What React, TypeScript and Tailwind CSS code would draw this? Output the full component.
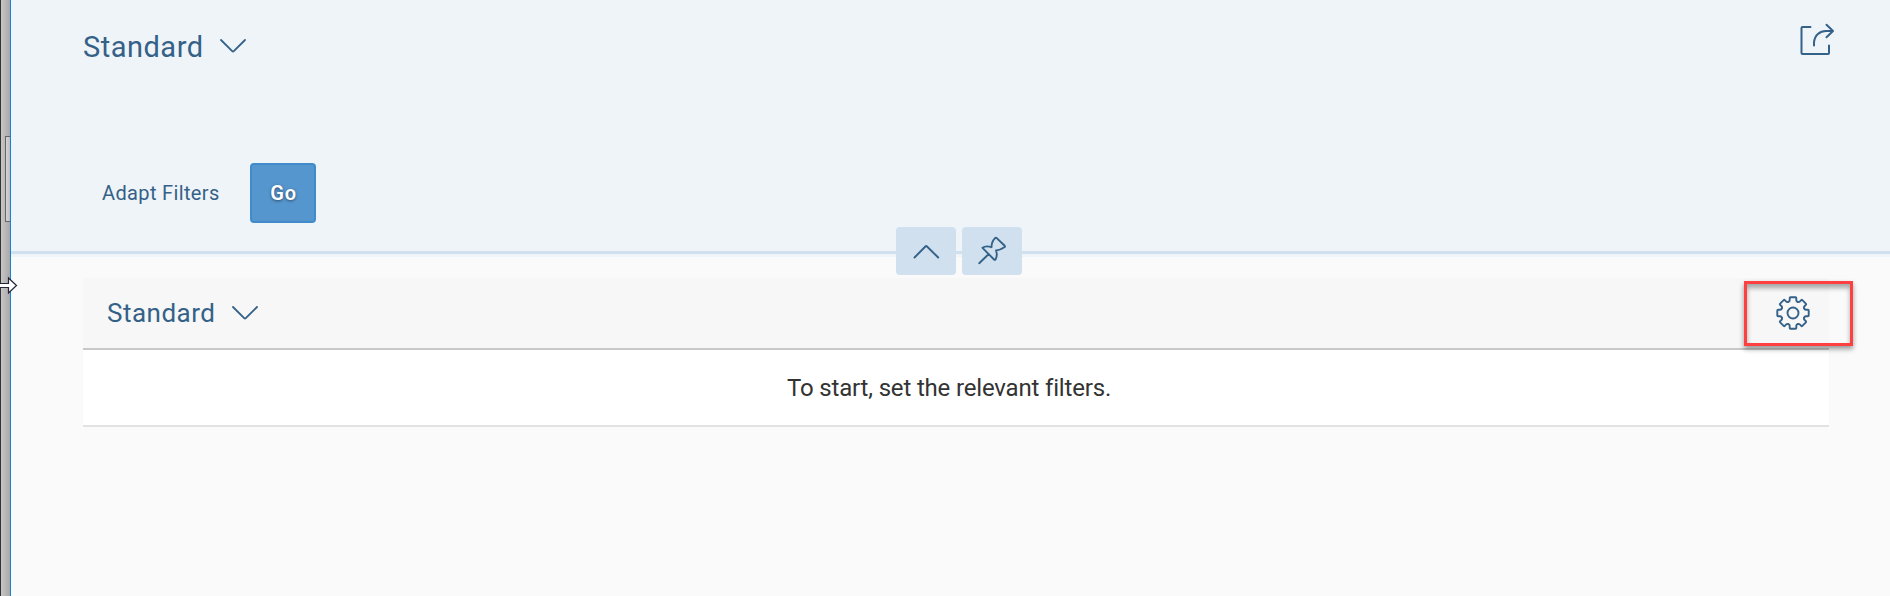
import React from "react";

const ChevronDown = () => (
  <svg width="28" height="16" viewBox="0 0 28 16" fill="none" stroke="#346187" strokeWidth="1.8" strokeLinecap="round" strokeLinejoin="round" className="shrink-0">
    <path d="M2 2L13.2 13.2Q14 14 14.8 13.2L26 2" />
  </svg>
);

const ShareIcon = () => (
  <svg width="40" height="36" viewBox="0 0 40 36" fill="none" stroke="#346187" strokeWidth="2" strokeLinecap="round" strokeLinejoin="round">
    <path d="M13.5 7H5.5Q4.5 7 4.5 8V33Q4.5 34 5.5 34H31Q32 34 32 33V25.5" />
    <path d="M17 25.5V22.5C17.500 15 23 11 29 11H35.500M29.500 4.800L36 11L29.500 17.200" />
  </svg>
);

const PinIcon = () => (
  <svg width="60" height="48" viewBox="0 0 60 48" fill="none" stroke="#346187" strokeWidth="1.9" strokeLinecap="round" strokeLinejoin="round">
    <path d="M17.200 36.200L26.700 27M20.500 20.800Q24 18.200 29.500 20.200Q29.500 15 33 11.200Q34 10.300 35 11.300L42.700 18.800Q43.400 19.600 42.400 20.300Q38.500 23 34 23.500Q35.800 28 33.500 32.500Q32.800 33.300 32 32.500Z" />
  </svg>
);

const GearIcon = () => (
  <svg width="36" height="36" viewBox="-18 -18 36 36" fill="none" stroke="#346187" strokeWidth="1.9" strokeLinecap="round" strokeLinejoin="round">
    <circle r="5.500" />
    {[0, 45, 90, 135, 180, 225, 270, 315].map((angle) => (
      <path key={angle} transform={`rotate(${angle})`} d="M-4.600 -11.200Q-3.300 -11.600 -3.300 -12.800V-14.900Q-3.300 -15.700 -2.500 -15.700H2.500Q3.300 -15.700 3.300 -14.900V-12.800Q3.300 -11.600 4.600 -11.200" />
    ))}
  </svg>
);

export default function App() {
  return (
    <div className="relative flex h-[596px] w-full overflow-hidden bg-[#fafafa] font-['Roboto','Liberation_Sans',sans-serif] text-[#346187]">
      <aside className="w-[11px] shrink-0 border-l border-r border-l-[#333] border-r-[#0f84d8] bg-linear-to-r from-[#c8c5c6] to-[#aaa8a9] pt-[136px]">
        <div className="ml-1 h-[86px] border border-r-0 border-[#65656a] bg-linear-to-r from-[#d8d3d5] to-[#bfbcbe]" />
      </aside>
      <main className="flex min-w-0 flex-1 flex-col">
        <header className="h-[254px] shrink-0 border-b-[3px] border-[#d1e0ee] bg-[#eff4f9]">
          <div className="flex h-[92px] items-center justify-between pl-[72px] pr-[53px]">
            <button className="flex items-center gap-[18px]">
              <span className="w-[118px] whitespace-nowrap pt-px text-[29px] leading-[34px] tracking-[0.5px]">Standard</span>
              <ChevronDown />
            </button>
            <button className="mb-[16px]"><ShareIcon /></button>
          </div>
          <div className="flex items-center pl-[91px] pt-[71px]">
            <button className="w-[148px] whitespace-nowrap text-left text-[20px] leading-6 tracking-[0.36px]">Adapt Filters</button>
            <button className="h-[60px] w-[66px] rounded-[4px] border-2 border-[#428bca] bg-[#5696ce] pl-px text-[20px] font-semibold tracking-[0.7px] text-white [text-shadow:0_1px_3px_#0008]">Go</button>
          </div>
        </header>
        <div className="h-[3px] shrink-0 bg-[#eff4f9]" />
        <section className="ml-[72px] mt-[21px] w-[1746px]">
          <div className="flex h-[72px] items-center justify-between border-b-2 border-[#c8c8c8] bg-[#f7f7f7] pl-6 pr-[18px]">
            <button className="flex items-center gap-[18px]">
              <span className="w-[106px] whitespace-nowrap text-[26px] leading-8 tracking-[0.5px]">Standard</span>
              <ChevronDown />
            </button>
            <button><GearIcon /></button>
          </div>
          <div className="flex h-[77px] items-center border-b-2 border-[#e2e2e2] bg-white pl-[704px] text-[24px] tracking-[-0.17px] text-[#333]">
            <span className="whitespace-nowrap">To start, set the relevant filters.</span>
          </div>
        </section>
      </main>
      <div className="absolute left-[896px] top-[227px] flex gap-[6px]">
        <button className="h-12 w-[60px] rounded-[4px] bg-[#d1e0ee]">
          <svg width="60" height="48" viewBox="0 0 60 48" fill="none" stroke="#346187" strokeWidth="1.9" strokeLinecap="round" strokeLinejoin="round">
            <path d="M18.500 30.500L29.400 19.500Q30.200 18.700 31 19.500L42.200 30.500" />
          </svg>
        </button>
        <button className="h-12 w-[60px] rounded-[4px] bg-[#d1e0ee]"><PinIcon /></button>
      </div>
      <div className="absolute left-[1744px] top-[281px] h-[65px] w-[109px] border-[3px] border-[#ff4040] [box-shadow:0_3px_5px_#0006,inset_0_4px_5px_#0005]" />
      <svg className="absolute left-0 top-[276px]" width="20" height="18" viewBox="0 0 20 18">
        <path d="M-1 7.500H8.500V2L16.500 9.500L8.500 17V11.500H-1" fill="#fff" stroke="#222536" strokeWidth="1.2" />
      </svg>
    </div>
  );
}
